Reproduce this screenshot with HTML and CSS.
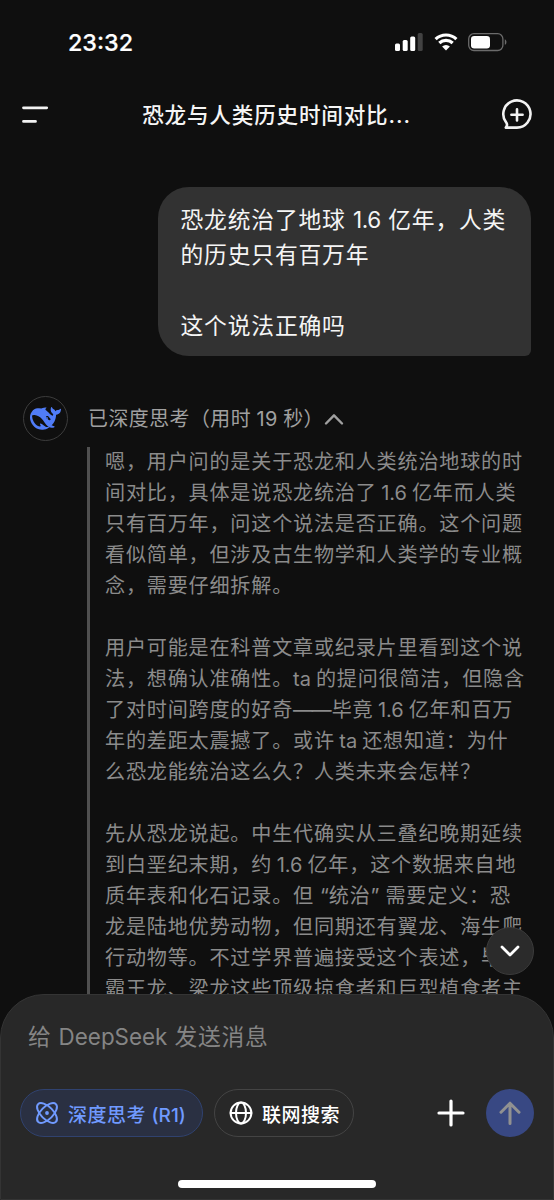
FILE: index.html
```html
<!DOCTYPE html>
<html lang="zh-CN">
<head>
<meta charset="utf-8">
<title>DeepSeek</title>
<link rel="stylesheet" href="styles.css">
</head>
<body>
<div class="screen">
  <div class="status">
    <span class="clock">23:32</span>
    <div class="status-icons">
      <svg class="signal" viewBox="0 0 28 18"><rect x="0" y="10.5" width="5" height="7.5" rx="1.5"/><rect x="7.7" y="7" width="5" height="11" rx="1.5"/><rect x="15.2" y="3.5" width="5" height="14.5" rx="1.5"/><rect class="off" x="22.7" y="0" width="5" height="18" rx="1.5"/></svg>
      <svg class="wifi" viewBox="0 0 24 18"><path d="M1.6 6.2a15 15 0 0 1 20.8 0M5.3 10a9.8 9.8 0 0 1 13.4 0"/><path class="dot" d="M8.1 13.6a5.6 5.6 0 0 1 7.8 0L12 17.6z"/></svg>
      <svg class="battery" viewBox="0 0 40 18"><rect class="shell" x=".7" y=".7" width="34.2" height="16.8" rx="5.2"/><rect class="level" x="3" y="3" width="19" height="12.4" rx="3.2"/><path class="tip" d="M36.8 6.2c2.2.9 2.2 4.7 0 5.6z"/></svg>
    </div>
  </div>
  <header class="topbar">
    <svg class="menu" viewBox="0 0 26 18"><path d="M1.5 1.8h23.2M1.5 15.4h12"/></svg>
    <h1 class="title">恐龙与人类历史时间对比<span class="dots">...</span></h1>
    <svg class="new-chat" viewBox="0 0 32 32"><path d="M4.8 28.6H16A13.6 13.6 0 1 0 4.9 23c1.2 1.6 1.9 2.6.6 4.4z"/><path d="M16 10.2v11.2M10.4 15.8h11.2"/></svg>
  </header>
  <main class="chat">
    <div class="bubble"><p>恐龙统治了地球 <span class="num">1.6</span> 亿年，人类</p><p>的历史只有百万年</p><p class="gap"></p><p>这个说法正确吗</p></div>
    <section class="answer">
      <div class="answer-head">
        <div class="avatar"><svg viewBox="0 0 24 24"><path d="M23.748 4.482c-.254-.124-.364.113-.512.234-.051.039-.094.09-.137.136-.372.397-.806.657-1.373.626-.829-.046-1.537.214-2.163.848-.133-.782-.575-1.248-1.247-1.548-.352-.156-.708-.311-.955-.65-.172-.241-.219-.51-.305-.774-.055-.16-.11-.323-.293-.35-.2-.031-.278.136-.356.276-.313.572-.434 1.202-.422 1.84.027 1.436.633 2.58 1.838 3.393.137.093.172.187.129.323-.082.28-.18.552-.266.833-.055.179-.137.217-.329.14a5.526 5.526 0 01-1.736-1.18c-.857-.828-1.631-1.742-2.597-2.458a11.365 11.365 0 00-.689-.471c-.985-.957.13-1.743.388-1.836.27-.098.093-.432-.779-.428-.872.004-1.67.295-2.687.684a3.055 3.055 0 01-.465.137 9.597 9.597 0 00-2.883-.102c-1.885.21-3.39 1.102-4.497 2.623C.082 8.606-.231 10.684.152 12.85c.403 2.284 1.569 4.175 3.36 5.653 1.858 1.533 3.997 2.284 6.438 2.14 1.482-.085 3.133-.284 4.994-1.86.47.234.962.327 1.78.397.63.059 1.236-.03 1.705-.128.735-.156.684-.837.419-.961-2.155-1.004-1.682-.595-2.113-.926 1.096-1.296 2.746-2.642 3.392-7.003.05-.347.007-.565 0-.845-.004-.17.035-.237.23-.256a4.173 4.173 0 001.545-.475c1.396-.763 1.96-2.015 2.093-3.517.02-.23-.004-.467-.247-.588zM11.581 18c-2.089-1.642-3.102-2.183-3.52-2.16-.392.024-.321.471-.235.763.09.288.207.486.371.739.114.167.192.416-.113.603-.673.416-1.842-.14-1.897-.167-1.361-.802-2.5-1.86-3.301-3.307-.774-1.393-1.224-2.887-1.298-4.482-.02-.386.093-.522.477-.592a4.696 4.696 0 011.529-.039c2.132.312 3.946 1.265 5.468 2.774.868.86 1.525 1.887 2.202 2.891.72 1.066 1.494 2.082 2.48 2.914.348.292.625.514.891.677-.802.09-2.14.11-3.054-.614zm1-6.44a.306.306 0 01.415-.287.302.302 0 01.2.288.306.306 0 01-.31.307.303.303 0 01-.304-.308zm3.11 1.596c-.2.081-.399.151-.59.16a1.245 1.245 0 01-.798-.254c-.274-.23-.47-.358-.552-.758a1.73 1.73 0 01.016-.588c.07-.327-.008-.537-.239-.727-.187-.156-.426-.199-.688-.199a.559.559 0 01-.254-.078c-.11-.054-.2-.19-.114-.358.028-.054.16-.186.192-.21.356-.202.767-.136 1.146.016.352.144.618.408 1.001.782.391.451.462.576.685.914.176.265.336.537.445.848.067.195-.019.354-.25.452z"/></svg></div>
        <span class="thought-label">已深度思考（用时 19 秒）</span>
        <svg class="chevron" viewBox="0 0 20 14"><path d="M2 11.5l8-8.2 8 8.2"/></svg>
      </div>
      <div class="thought">
        <p>嗯，用户问的是关于恐龙和人类统治地球的时</p>
        <p>间对比，具体是说恐龙统治了<span class="lat">1.6</span>亿年而人类</p>
        <p>只有百万年，问这个说法是否正确。这个问题</p>
        <p>看似简单，但涉及古生物学和人类学的专业概</p>
        <p>念，需要仔细拆解。</p>
        <p class="gap"></p>
        <p>用户可能是在科普文章或纪录片里看到这个说</p>
        <p>法，想确认准确性。<span class="lat first">ta</span>的提问很简洁，但隐含</p>
        <p>了对时间跨度的好奇<span class="dash">——</span>毕竟<span class="lat">1.6</span>亿年和百万</p>
        <p>年的差距太震撼了。或许<span class="lat">ta</span>还想知道：为什</p>
        <p>么恐龙能统治这么久？人类未来会怎样？</p>
        <p class="gap"></p>
        <p>先从恐龙说起。中生代确实从三叠纪晚期延续</p>
        <p>到白垩纪末期，约<span class="lat">1.6</span>亿年，这个数据来自地</p>
        <p>质年表和化石记录。但<span class="quote open">“</span>统治<span class="quote close">”</span>需要定义：恐</p>
        <p>龙是陆地优势动物，但同期还有翼龙、海生爬</p>
        <p>行动物等。不过学界普遍接受这个表述，毕竟</p>
        <p>霸王龙、梁龙这些顶级掠食者和巨型植食者主</p>
      </div>
    </section>
    <div class="to-bottom"><svg viewBox="0 0 20 14"><path d="M2 3l8 8 8-8"/></svg></div>
  </main>
  <footer class="composer">
    <div class="placeholder">给 <span class="brand">DeepSeek</span> 发送消息</div>
    <div class="actions">
      <div class="pill active">
        <svg class="atom" viewBox="0 0 24 24"><ellipse cx="12" cy="12" rx="12.6" ry="6.2" transform="rotate(45 12 12)"/><ellipse cx="12" cy="12" rx="12.6" ry="6.2" transform="rotate(-45 12 12)"/><circle class="core" cx="12" cy="12" r="1.9"/></svg>
        <span>深度思考 <span class="tag">(R1)</span></span>
      </div>
      <div class="pill">
        <svg class="globe" viewBox="0 0 24 24"><circle cx="12" cy="12" r="10.4"/><ellipse cx="12" cy="12" rx="5" ry="10.4"/><path d="M1.6 12h20.8"/></svg>
        <span>联网搜索</span>
      </div>
      <svg class="plus" viewBox="0 0 28 28"><path d="M14 2v24M2 14h24"/></svg>
      <div class="send"><svg viewBox="0 0 24 26"><path d="M12 23.5V3.5M3 12.2l9-9 9 9"/></svg></div>
    </div>
    <div class="home-bar"></div>
  </footer>
</div>
</body>
</html>
```
FILE: styles.css
```css
* { box-sizing: border-box; }
body { margin: 0; background: #0f0f0f; }
p, h1 { margin: 0; }
svg { display: block; fill: none; stroke-linecap: round; stroke-linejoin: round; flex: none; overflow: visible; }
.screen {
  width: 554px; height: 1200px; display: flex; flex-direction: column;
  overflow: hidden; background: #0f0f0f; color: #f5f5f5;
  font-family: Inter, "Noto Sans CJK SC", sans-serif;
}

.status { height: 84px; padding: 0 46px 0 68px; display: flex; align-items: center; justify-content: space-between; flex: none; }
.clock { font-size: 23.3px; font-weight: 500; color: #fff; letter-spacing: 0; -webkit-text-stroke: .2px #fff; }
.status-icons { display: flex; align-items: center; gap: 10px; padding-bottom: 1px; }
.signal { width: 28px; height: 18px; fill: #fff; margin-right: 1px; }
.signal .off { fill: #424242; }
.wifi { width: 24px; height: 18px; stroke: #fff; stroke-width: 3.2; stroke-linecap: butt; }
.wifi .dot { fill: #fff; stroke: none; }
.battery { width: 40px; height: 18px; }
.shell { stroke: #6b6b6b; stroke-width: 1.3; }
.level { fill: #fff; }
.tip { fill: #6b6b6b; }

.topbar { height: 60px; padding: 1px 21px 0 22px; display: flex; align-items: center; justify-content: space-between; flex: none; }
.menu { width: 26px; height: 18px; stroke: #f2f2f2; stroke-width: 2.8; }
.title { font-size: 21.6px; font-weight: 500; letter-spacing: .8px; line-height: 30px; color: #f5f5f5; margin-left: 4px; padding-top: 1px; }
.dots { letter-spacing: .9px; }
.new-chat { width: 32px; height: 32px; stroke: #f2f2f2; stroke-width: 2.6; }

.chat { flex: 1; min-height: 0; position: relative; padding: 43px 23px 0; overflow: hidden; }
.bubble {
  width: 373px; height: 169px; margin-left: auto; padding: 15px 0 0 22.5px;
  border-radius: 31px 31px 6px 31px; background: #323232;
  font-size: 22.8px; letter-spacing: .8px; line-height: 35.2px; white-space: nowrap;
}
.bubble p { height: 35.2px; }
.bubble .num { letter-spacing: -.3px; font-size: 22.5px; }
.answer { margin-top: 40px; }
.answer-head { height: 45px; display: flex; align-items: center; }
.avatar { width: 45px; height: 45px; border: 1.5px solid #3c3c3c; border-radius: 50%; display: grid; place-items: center; }
.avatar svg { width: 31px; height: 31px; fill: #507cf8; }
.thought-label { margin: -2px 0 0 20px; font-size: 19.9px; letter-spacing: .5px; word-spacing: -.8px; color: #a0a0a0; white-space: nowrap; width: 236px; }
.chevron { width: 20px; height: 14px; stroke: #a0a0a0; stroke-width: 2.4; }
.thought {
  margin: 8px 0 0 64px; padding-left: 15px; border-left: 3px solid #505050;
  font-size: 20.1px; letter-spacing: .8px; line-height: 31px; color: #8b8b8b; white-space: nowrap;
}
.thought p { height: 31px; margin-top: 0; }
.thought p:first-child { margin-top: -2.5px; }
.lat { margin: 0 5px 0 4.5px; letter-spacing: 0; font-size: 20px; }
.lat.first { margin-left: 0; }
.dash { letter-spacing: -1.6px; margin-right: 1.6px; }
.quote { letter-spacing: 0; }
.quote.open { margin: 0 0 0 6px; }
.quote.close { margin: 0 6px 0 0; }
.to-bottom {
  position: absolute; left: 486px; top: 783px; width: 48px; height: 48px; border-radius: 50%;
  background: #2b2b2b; border: 1.5px solid #3b3b3b; display: grid; place-items: center;
}
.to-bottom svg { width: 20px; height: 14px; stroke: #fff; stroke-width: 2.8; }

.composer {
  height: 206px; flex: none; padding: 26px 19px 0; border: 1.5px solid #343434; border-bottom-width: 1px;
  border-radius: 44px 44px 0 0; background: #282828;
}
.placeholder { height: 32px; padding-left: 8px; font-size: 22.8px; line-height: 32px; letter-spacing: .7px; color: #858585; white-space: nowrap; }
.brand { letter-spacing: 0; font-size: 22.4px; }
.actions { margin-top: 36px; display: flex; align-items: center; height: 48px; }
.pill { height: 48px; width: 140px; padding-left: 14px; display: flex; align-items: center; gap: 9px; border: 1.5px solid #444; border-radius: 24px; color: #fff; font-size: 19px; font-weight: 500; letter-spacing: .5px; white-space: nowrap; }
.pill.active { width: 183px; margin-right: 11px; background: #2a3042; border-color: #30426f; color: #709aff; }
.tag { letter-spacing: 0; }
.atom, .globe { width: 24px; height: 24px; stroke: currentColor; stroke-width: 2; }
.atom .core { fill: currentColor; stroke: none; }
.plus { width: 28px; height: 28px; margin-left: 83px; stroke: #fff; stroke-width: 3.2; }
.send { width: 48px; height: 48px; margin-left: 21px; border-radius: 50%; background: #384883; display: grid; place-items: center; }
.send svg { width: 24px; height: 26px; stroke: #919191; stroke-width: 3; }
.home-bar { width: 198px; height: 8px; margin: 43px 0 0 158px; border-radius: 4px; background: #fff; }
```
